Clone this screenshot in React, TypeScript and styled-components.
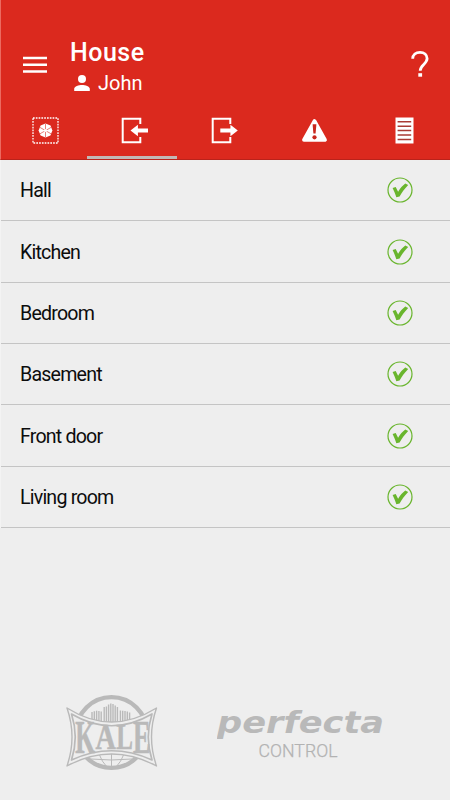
import React from "react";
import styled, { createGlobalStyle } from "styled-components";

const GlobalStyle = createGlobalStyle`
  *, *::before, *::after { box-sizing: border-box; }
  body { margin: 0; background: #eeeeee; font-family: Roboto, "Noto Sans", sans-serif; }
  svg { display: block; flex: none; }
`;

const Screen = styled.div`
  display: flex;
  flex-direction: column;
  width: 450px;
  height: 800px;
  background: #eeeeee;
  overflow: hidden;
`;

const Header = styled.header`
  display: flex;
  flex-direction: column;
  height: 160px;
  background: #db291e;
  border-left: 1px solid #ec6a60;
  border-bottom: 1px solid #b9231b;
  color: #fff;
`;

const AppBar = styled.div`
  display: flex;
  align-items: flex-start;
  height: 101px;
  padding: 36px 21px 0 22px;
`;

const IconButton = styled.button<{ $top: number }>`
  display: block;
  margin: ${(p) => p.$top}px 0 0;
  padding: 0;
  border: 0;
  background: none;
  color: inherit;
`;

const Titles = styled.div`
  flex: 1;
  margin-left: 23px;
`;

const Title = styled.h1`
  margin: 0;
  font-size: 25px;
  line-height: 33px;
  font-weight: 500;
  letter-spacing: 0.5px;
`;

const User = styled.div`
  display: flex;
  align-items: center;
  gap: 8px;
  padding-left: 4px;
  font-size: 20px;
  line-height: 28px;
`;

const Tabs = styled.nav`
  display: grid;
  grid-template-columns: repeat(5, 89.8px);
  height: 59px;
  margin-left: -4px;
`;

const Tab = styled.button<{ $active?: boolean }>`
  display: flex;
  justify-content: center;
  align-items: flex-start;
  margin: 0;
  padding: 16.5px 0 0 6.500px;
  border: 0;
  border-bottom: 3px solid ${(p) => (p.$active ? "#c2b8b6" : "transparent")};
  height: 59px;
  background: none;
  color: #fff;
`;

const List = styled.ul`
  margin: 0;
  padding: 0;
  list-style: none;
  border-left: 1px solid #f3f3f3;
`;

const Row = styled.li`
  display: flex;
  align-items: center;
  justify-content: space-between;
  height: 61.35px;
  padding: 0 37px 0 19px;
  border-bottom: 1px solid #c4c4c4;
  color: #0c0c0c;
`;

const RoomName = styled.span`
  padding-top: 1.5px;
  font-size: 19.6px;
  letter-spacing: -0.8px;
`;

const Footer = styled.footer`
  display: flex;
  align-items: flex-start;
  gap: 58px;
  margin: auto 0 0;
  padding: 0 0 27px 65px;
`;

const MenuIcon = () => (
  <svg width="24" height="18" viewBox="0 0 24 18" stroke="#fff" strokeWidth="2.5">
    <path d="M0 2h24M0 8.8h24M0 15.6h24" />
  </svg>
);

const PersonIcon = () => (
  <svg width="16" height="16" viewBox="0 0 16 16" fill="#fff">
    <circle cx="8" cy="4" r="4" />
    <path d="M.2 16v-2.2C.2 11.4 4.8 10 8 10s7.8 1.4 7.8 3.8V16z" />
  </svg>
);

const HelpIcon = () => (
  <svg width="18" height="28" viewBox="0 0 18 28" fill="none" stroke="#fff">
    <path d="M1.7 8.8C1.7 4.6 4.8 2.3 9 2.3s7.1 2.4 7.1 6.3c0 5.5-6.9 6.2-6.9 12.2" strokeWidth="2.8" />
    <path d="M9.2 23.2v3.5" strokeWidth="3.8" />
  </svg>
);

const ZoneIcon = () => (
  <svg width="27" height="27" viewBox="0 0 27 27">
    <rect x="1" y="1" width="25" height="25" fill="none" stroke="#fff" strokeWidth="1.3" strokeDasharray="1.7 1.1" />
    <path d="M13.5 6.6l5 2 1.9 4.9-2 4.9-4.9 2-4.9-2-2-4.9 2-4.9z" fill="#fff" />
    <path d="M13.5 7v13M7.8 10.3l11.4 6.6M7.8 16.9l11.4-6.6" stroke="#db291e" strokeWidth=".6" />
    <circle cx="13.5" cy="13.5" r="1.6" fill="#fff" />
  </svg>
);

const EnterIcon = () => (
  <svg width="27" height="27" viewBox="0 0 27 27">
    <path d="M19.3 7V1.7H1.7v23.6h17.6v-5.3" fill="none" stroke="#fff" strokeWidth="2" />
    <path d="M9.5 13.5l7.4-5.7v3.8H27v3.9H16.9v3.8z" fill="#fff" />
  </svg>
);

const ExitIcon = () => (
  <svg width="27" height="27" viewBox="0 0 27 27">
    <path d="M19.3 7V1.7H1.7v23.6h17.6v-5.3" fill="none" stroke="#fff" strokeWidth="2" />
    <path d="M26.8 13.5l-7.4-5.7v3.8H9.3v3.9h10.1v3.8z" fill="#fff" />
  </svg>
);

const AlertIcon = () => (
  <svg width="27" height="27" viewBox="0 0 27 27">
    <path d="M13.5 4l10.6 19H2.9z" fill="#fff" stroke="#fff" strokeWidth="3.6" strokeLinejoin="round" />
    <path d="M11.6 7.2h3.8l-.8 9.3h-2.2z" fill="#c8271d" />
    <circle cx="13.5" cy="20.3" r="2.1" fill="#c8271d" />
  </svg>
);

const LogIcon = () => (
  <svg width="27" height="27" viewBox="0 0 27 27">
    <path d="M4.5.5h18v26h-18z" fill="#fff" />
    <path d="M6.6 4.8h13.6M6.6 9.2h13.6M6.6 13.6h13.6M6.6 18h13.6M6.6 22.4h13.6" stroke="#a93b34" strokeWidth="1.5" />
  </svg>
);

const CheckIcon = () => (
  <svg width="26" height="26" viewBox="0 0 26 26">
    <circle cx="13" cy="13" r="12" fill="none" stroke="#69b52d" strokeWidth="1.2" />
    <path d="M5.6 11l3.1-.9 2.4 4.6C13.200 11 15.500 8.600 18.300 6.400l2.900 1.500C17.400 11.800 14.600 15.500 12.600 19.600l-3.300.7C8.400 17.400 7.200 14.400 5.600 11z" fill="#69b52d" />
  </svg>
);

const TOWERS = [
  [27, 18], [29.3, 17.2], [31.6, 16.7], [33.9, 17], [36.2, 17.5],
  [39.2, 13], [41.4, 12.5], [43.6, 10.5], [45.8, 9.5], [48, 10], [50.2, 11.5], [52.4, 13],
  [55.4, 16.5], [57.7, 16.7], [60, 17], [62.3, 17.5], [64.6, 18.5],
];

const LETTERS = [
  { char: "K", x: 10.2, y: 59, sx: 0.8, sy: 1.45 },
  { char: "A", x: 30.5, y: 54.5, sx: 0.88, sy: 1.1 },
  { char: "L", x: 51.2, y: 54.5, sx: 0.78, sy: 1.1 },
  { char: "E", x: 68, y: 59, sx: 0.82, sy: 1.42 },
];

const KaleLogo = () => (
  <svg width="94" height="79" viewBox="0 0 94 79">
    <circle cx="46.5" cy="38.5" r="35.4" fill="none" stroke="#b9b9b9" strokeWidth="4.4" />
    <g fill="none" stroke="#b9b9b9" strokeWidth="1">
      <path d="M34 60q3 8 8 13M59 60q-3 8-8 13" />
      <path d="M46.5 55v18M26 65q20 2 41 0" />
    </g>
    {TOWERS.map(([x, top]) => (
      <path key={x} d={`M${x} ${top}V29`} stroke="#b9b9b9" strokeWidth="1.4" />
    ))}
    <path
      d="M2 14Q46.5 42 91.5 14Q81.5 43 91.5 72Q46.5 48 2 72Q12 43 2 14z"
      fill="#eeeeee" stroke="#b9b9b9" strokeWidth="1.4" strokeLinejoin="round"
    />
    <path
      d="M6.5 20Q46.5 43.5 87 20Q79.5 43 87 66Q46.5 47.5 6.5 66Q14 43 6.5 20z"
      fill="#eeeeee" stroke="#b9b9b9" strokeWidth="1.7" strokeLinejoin="round"
    />
    {LETTERS.map((l) => (
      <text
        key={l.char}
        transform={`translate(${l.x} ${l.y}) scale(${l.sx} ${l.sy})`}
        fontFamily='"Liberation Serif", serif' fontWeight="700" fontSize="32"
        fill="#b9b9b9" stroke="#b9b9b9" strokeWidth=".5"
      >
        {l.char}
      </text>
    ))}
  </svg>
);

const PerfectaLogo = () => (
  <svg width="170" height="79" viewBox="0 0 170 79">
    <text
      x="0" y="38.5" textLength="167" lengthAdjust="spacingAndGlyphs"
      fontFamily='"DejaVu Sans", sans-serif' fontWeight="700" fontStyle="italic" fontSize="30.5" fill="#b9b9b9"
    >
      perfecta
    </text>
    <text
      x="41.5" y="62.500" textLength="79" lengthAdjust="spacingAndGlyphs"
      fontFamily="Roboto, sans-serif" fontSize="18.500" fontWeight="300" fill="#b2b2b2" stroke="#b2b2b2" strokeWidth=".25"
    >
      CONTROL
    </text>
  </svg>
);

const TABS = [
  { name: "Zones", Icon: ZoneIcon },
  { name: "Inputs", Icon: EnterIcon, active: true },
  { name: "Outputs", Icon: ExitIcon },
  { name: "Troubles", Icon: AlertIcon },
  { name: "Events", Icon: LogIcon },
];

const ROOMS = ["Hall", "Kitchen", "Bedroom", "Basement", "Front door", "Living room"];

export default function App() {
  return (
    <Screen>
      <GlobalStyle />
      <Header>
        <AppBar>
          <IconButton $top={20} aria-label="Menu"><MenuIcon /></IconButton>
          <Titles>
            <Title>House</Title>
            <User><PersonIcon />John</User>
          </Titles>
          <IconButton $top={14} aria-label="Help"><HelpIcon /></IconButton>
        </AppBar>
        <Tabs>
          {TABS.map(({ name, Icon, active }) => (
            <Tab key={name} $active={active} aria-label={name}><Icon /></Tab>
          ))}
        </Tabs>
      </Header>
      <List>
        {ROOMS.map((room) => (
          <Row key={room}><RoomName>{room}</RoomName><CheckIcon /></Row>
        ))}
      </List>
      <Footer>
        <KaleLogo />
        <PerfectaLogo />
      </Footer>
    </Screen>
  );
}
